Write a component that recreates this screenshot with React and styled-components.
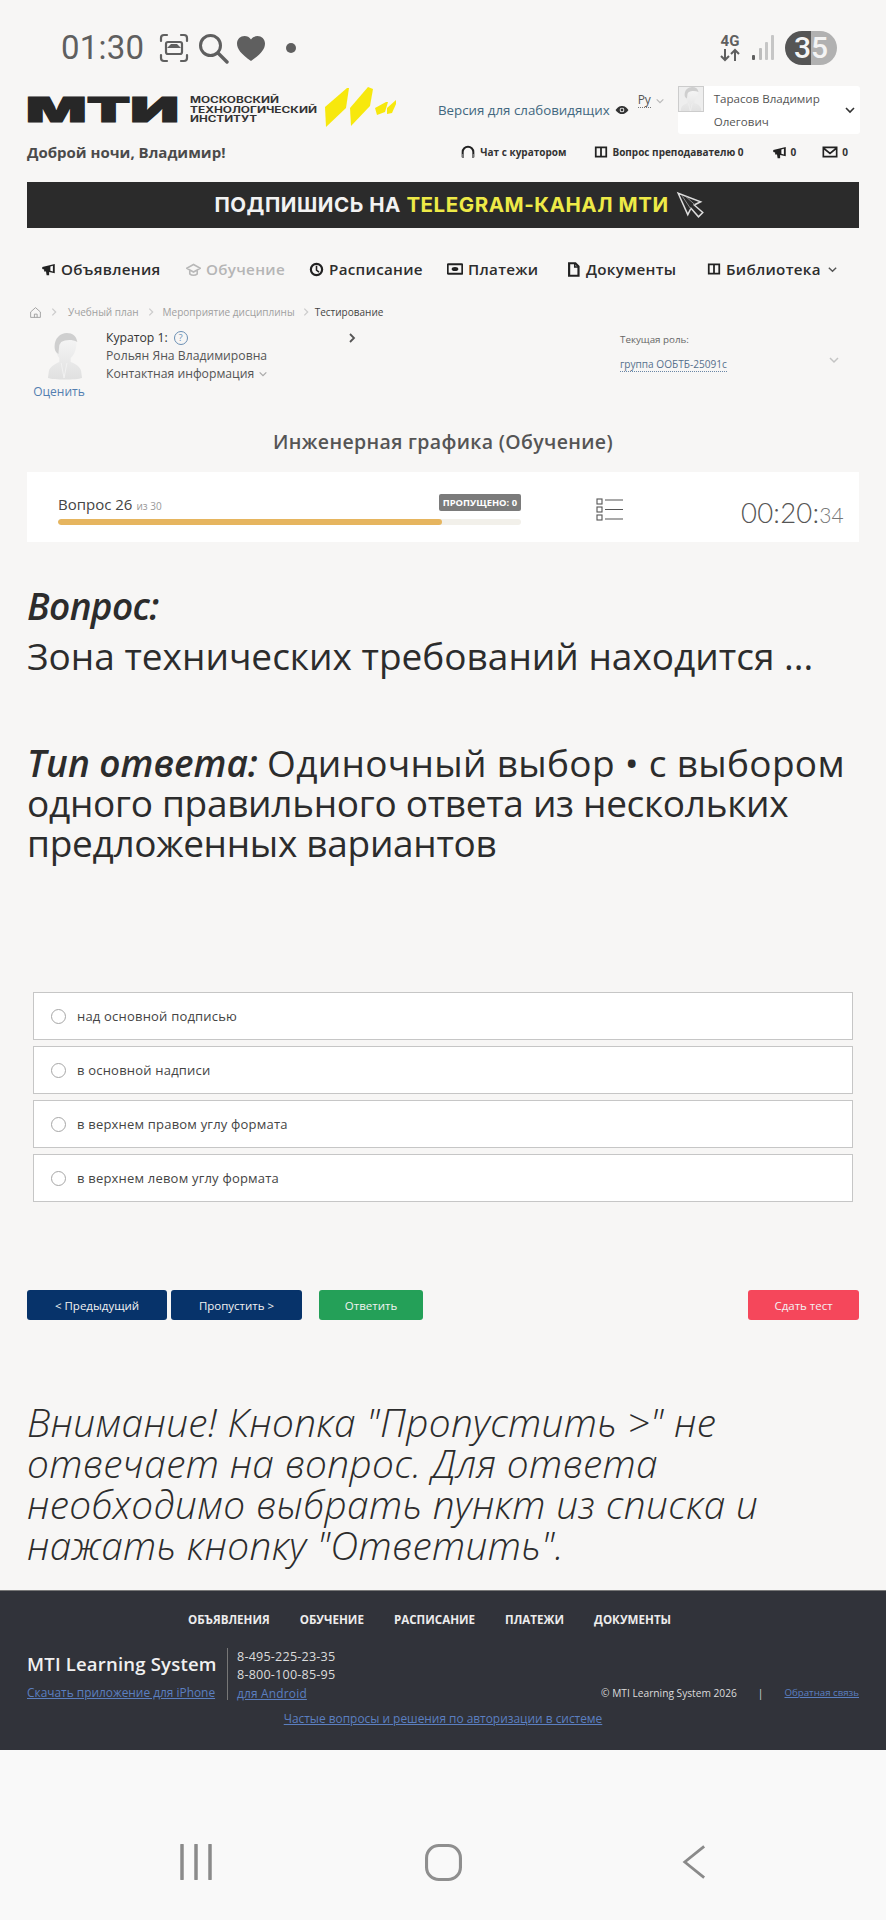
import React from 'react';
import styled, { createGlobalStyle } from 'styled-components';

const Global = createGlobalStyle`
  html, body { margin: 0; padding: 0; background: #f7f6f5; }
  body { font-family: "Open Sans", "Noto Sans", sans-serif; color: #333; }
  * { box-sizing: border-box; }
`;
const Page = styled.div`width: 886px; height: 1920px; overflow: hidden; display: flex; flex-direction: column; background: #f7f6f5;`;

const Svg = styled.svg`display: block; flex: none; margin-left: ${p => p.$ml || 0}px; margin-right: ${p => p.$mr || 0}px;`;

const StatusBar = styled.div`height: 86px; padding: 26px 49px 0 61px; display: flex; justify-content: space-between; align-items: flex-start;`;
const StatusLeft = styled.div`display: flex; align-items: center; height: 44px; color: #5f5f5f;`;
const Clock = styled.span`font: 400 33px/44px Roboto, sans-serif; margin-right: 14px; letter-spacing: .2px;`;
const StatusRight = styled.div`display: flex; align-items: center; height: 44px; gap: 10px;`;
const Net = styled.div`display: flex; flex-direction: column; align-items: center; color: #5f5f5f; font: 700 15px/14px Roboto, sans-serif; width: 22px;`;
const Battery = styled.div`width: 52px; height: 34px; border-radius: 17px; background: linear-gradient(90deg, #555 0 50%, #b1b1b1 50%); color: #f4f4f4; font: 500 30px/34px Roboto, sans-serif; text-align: center;`;

const Header = styled.div`display: flex; padding: 0 28px 0 27px; height: 48px; align-items: flex-start;`;
const Logo = styled.div`width: 372px; height: 48px; flex: none;`;
const Vision = styled.a`margin: 14px 0 0 39px; font-size: 13.3px; line-height: 20px; color: #41677f; white-space: nowrap; display: flex; align-items: center; gap: 5px; flex: none;`;
const Lang = styled.div`margin: 7px 0 0 9px; font-size: 12px; line-height: 20px; color: #555; display: flex; align-items: center; gap: 4px; flex: none; width: 40px;`;
const LangText = styled.span`border-bottom: 1px dotted #777; line-height: 14px;`;
const User = styled.div`width: 182px; height: 48px; background: #fff; border-radius: 3px; display: flex; position: relative; flex: none;`;
const Avatar = styled.div`width: 26px; height: 26px; border: 1px solid #ccc; background: #eee; overflow: hidden; flex: none; display: flex; justify-content: center;`;
const UserName = styled.div`margin-left: 10px; width: 120px; font-size: 11.6px; line-height: 23px; color: #555; padding-top: 1px;`;
const UserChevron = styled.div`position: absolute; right: 4px; top: 18px; color: #333;`;

const SubHeader = styled.div`display: flex; align-items: center; padding: 0 38px 0 27px; height: 24px; margin-top: 6px;`;
const Greeting = styled.div`font-size: 15px; font-weight: 700; color: #4b4b4b; flex: 1;`;
const QuickLink = styled.div`display: flex; align-items: center; gap: 4px; font-size: 10px; font-weight: 700; color: #333; margin-left: ${p => p.$gap || 0}px; white-space: nowrap;`;

const Banner = styled.div`height: 46px; margin: 18px 27px 0; padding-left: 34px; background: #2b2b2b; display: flex; align-items: center; justify-content: center; gap: 7px; font: 700 20.5px/46px Inter, sans-serif; letter-spacing: .55px; color: #f2f2f2;`;
const Yellow = styled.span`color: #eeea47;`;

const Nav = styled.nav`display: grid; grid-template-columns: 145px 123px 138px 119px 141px auto; align-items: center; height: 24px; margin-top: 29px; padding-left: 41px;`;
const NavItem = styled.div`display: flex; align-items: center; gap: 5px; font-size: 15.2px; font-weight: 600; letter-spacing: .3px; color: ${p => p.$muted ? '#b5b5b5' : '#2d2d2d'}; white-space: nowrap;`;
const Tint = styled.span`display: flex; color: ${p => p.$c}; margin-left: ${p => p.$ml || 0}px;`;

const Crumbs = styled.div`display: flex; align-items: center; height: 18px; margin-top: 22px; padding-left: 29px; font-size: 10px; color: #a0a0a0;`;
const CrumbSep = styled.span`margin: 0 ${p => p.$r ?? 7}px 0 ${p => p.$l ?? 7}px; display: inline-flex; color: #ccc;`;
const CrumbLast = styled.span`color: #444;`;

const Curator = styled.div`display: flex; height: 80px; margin-top: 7px; padding-left: 33px;`;
const CuratorPhoto = styled.div`width: 52px; padding-top: 5px; display: flex; flex-direction: column; align-items: center; font-size: 12px; color: #527eb0; line-height: 16px; flex: none;`;
const Rate = styled.span`margin-top: 4px;`;
const CuratorInfo = styled.div`margin-left: 21px; width: 254px; font-size: 12.2px; line-height: 18px; color: #555; padding-top: 1px; position: relative; flex: none;`;
const CuratorTitle = styled.div`color: #333; display: flex; align-items: center; gap: 6px;`;
const ContactRow = styled.div`display: flex; align-items: center; gap: 4px;`;
const Help = styled.span`width: 14px; height: 14px; border-radius: 50%; border: 1.5px solid #6a8fb3; color: #6a8fb3; font-size: 9.5px; line-height: 11px; text-align: center; display: inline-block;`;
const NextArrow = styled.div`position: absolute; right: 2px; top: 4px; color: #555;`;
const Role = styled.div`margin-left: 260px; flex: 1; position: relative; color: #666; line-height: 23px;`;
const RoleLabel = styled.div`font-size: 9.8px;`;
const RoleValue = styled.span`border-bottom: 1px dotted #6a86a5; color: #56708c; font-size: 10.1px; line-height: 14px; display: inline-block;`;
const RoleChevron = styled.div`position: absolute; left: 208px; top: 26px; color: #c4c4c4;`;

const Title = styled.h1`margin: 20px 0 0; text-align: center; font-size: 19.5px; line-height: 28px; font-weight: 600; color: #555; letter-spacing: .35px;`;

const Progress = styled.div`height: 70px; margin: 16px 27px 0; background: #fff; display: flex; align-items: flex-start; position: relative;`;
const ProgressMain = styled.div`width: 463px; margin: 21px 0 0 31px; flex: none;`;
const ProgressHead = styled.div`display: flex; justify-content: space-between; align-items: center; height: 22px;`;
const QuestionNo = styled.span`font-size: 15px; color: #444;`;
const Of = styled.span`font-size: 10px; color: #999; margin-left: 4px;`;
const Skipped = styled.span`background: #7b7b7b; color: #fff; font-size: 9.4px; font-weight: 700; padding: 0 4px; line-height: 17px; height: 17px; border-radius: 2px; margin-top: -4px; white-space: nowrap;`;
const Track = styled.div`height: 6px; border-radius: 3px; background: #f2f0ea; margin-top: 4px; overflow: hidden;`;
const Fill = styled.div`height: 100%; border-radius: 3px; background: #e6b55f;`;
const ListIcon = styled.div`margin: 25px 0 0 75px; flex: none;`;
const Timer = styled.div`position: absolute; right: 15px; top: 23px; font: 300 27.5px/36px Lato, "Open Sans", sans-serif; color: #555; letter-spacing: .2px;`;
const TimerSec = styled.span`font-size: 21px; color: #777;`;

const Content = styled.div`padding: 0 27px; margin-top: 39px; color: #2c2c2c; font-size: 37px;`;
const Strong = styled.b`font-style: italic; font-weight: 600; letter-spacing: ${p => p.$ls || 0}px;`;
const Block = styled.div`margin-bottom: ${p => p.$mb}px; line-height: ${p => p.$lh}px; letter-spacing: ${p => p.$ls || 0}px;`;
const Spaced = styled.span`letter-spacing: .3px;`;

const Answers = styled.div`margin: 129px 33px 0; display: flex; flex-direction: column; gap: 6px;`;
const Answer = styled.label`height: 48px; background: #fff; border: 1.5px solid #c6c6c6; display: flex; align-items: center; padding-left: 17px; font-size: 13px; color: #444; gap: 11px; letter-spacing: .2px;`;
const Radio = styled.span`width: 15px; height: 15px; border-radius: 50%; border: 1.5px solid #a6a6a6; background: #fff; flex: none;`;

const Buttons = styled.div`display: flex; margin: 88px 27px 0; height: 30px;`;
const Btn = styled.button`height: 30px; width: ${p => p.$w}px; margin-left: ${p => p.$ml || 0}px; background: ${p => p.$bg}; color: #f2f2f2; border: 0; border-radius: 3px; font: 400 11.5px "Open Sans", sans-serif; padding: 0; flex: none;`;

const Notice = styled.div`margin: 82px 27px 0; font-style: italic; font-weight: 300; font-size: 38.8px; line-height: 41px; color: #2c2c2c; letter-spacing: .35px;`;

const Footer = styled.footer`height: 160px; margin-top: 24px; background: #31333a; border-top: 1px solid #777; flex: none; color: #e6e6e6;`;
const FooterNav = styled.div`display: flex; justify-content: center; gap: 30px; padding: 19px 27px 0 0; font-size: 11.6px; font-weight: 700; line-height: 20px; color: #ececec;`;
const FooterRow = styled.div`display: flex; padding-left: 27px; margin-top: 18px; height: 52px;`;
const Brand = styled.div`width: 191px; flex: none; display: flex; flex-direction: column; gap: 7px;`;
const BrandName = styled.div`font-size: 18.5px; font-weight: 600; line-height: 25px; margin-top: 3px; color: #f0f0f0; letter-spacing: .2px; white-space: nowrap;`;
const FLink = styled.a`color: #5b7fc0; text-decoration: underline; font-size: ${p => p.$fs || 11.9}px; white-space: nowrap; line-height: 18px;`;
const Contacts = styled.div`margin-left: 9px; padding-left: 9px; border-left: 1px solid #777; width: 150px; flex: none; font-size: 12.6px; line-height: 18px; color: #dcdcdc; display: flex; flex-direction: column; letter-spacing: .2px;`;
const Copy = styled.div`margin-left: auto; margin-right: 27px; padding-top: 36px; font-size: 10.2px; line-height: 18px; display: flex; color: #dcdcdc; white-space: nowrap;`;
const CopySep = styled.span`margin: 0 21px;`;
const Faq = styled.div`text-align: center; margin-top: 8px; line-height: 18px;`;

const NavBar = styled.div`flex: 1; display: flex; justify-content: space-between; align-items: center; padding: 54px 180px 0 178px; background: #f9f9f9;`;

const A = ({ s = 14, h, ml, mr, children, vb = '0 0 24 24' }) => <Svg width={s} height={h || s} viewBox={vb} $ml={ml} $mr={mr}>{children}</Svg>;
const Chevron = ({ s = 10, w = 1.5 }) => <A s={s} vb="0 0 12 12"><path d="M2 4l4 4 4-4" fill="none" stroke="currentColor" strokeWidth={w} /></A>;
const Gt = ({ s = 12, w = 1.5 }) => <A s={s} vb="0 0 12 12"><path d="M4 2l4 4-4 4" fill="none" stroke="currentColor" strokeWidth={w} /></A>;
const Megaphone = ({ s = 14 }) => <A s={s}><path d="M2 8l20-5v15l-9-2v5H9l-1-6H5l0-3-3-1z" fill="#222" /><path d="M15 7l4-1v9l-4-1z" fill="#fff" /></A>;
const Book = ({ s = 14 }) => <A s={s}><path d="M3 4h18v16H3z M12 4v16" fill="none" stroke="#222" strokeWidth="3" /></A>;
const Person = ({ w = 36, h = 47, ml, id = 'pg' }) => (
  <Svg width={w} height={h} viewBox="0 0 38 47" $ml={ml} preserveAspectRatio="none">
    <defs><linearGradient id={id} x1="0" y1="0" x2="0" y2="1"><stop offset="0" stopColor="#f7f7f7" /><stop offset="1" stopColor="#e0e0e0" /></linearGradient></defs>
    <path d="M9 12C9 5 13 1 20 1s11 4 11 10c0 6-3 12-6 14v4c6 2 10 5 11 9l1 7c-6 2-30 2-36 0l1-7c1-4 6-7 11-9v-4c-2-2-4-7-5-13z" fill={`url(#${id})`} />
    <path d="M8 14C8 5 14 0 21 0c6 0 10 3 11 9-6-3-13-2-17 0l-2 3-1 9c-3-2-4-4-4-7z" fill="#cfcfcf" />
    <path d="M15 30l3 15 3-15" fill="none" stroke="#f2f2f2" />
  </Svg>
);

const YellowMark = () => (
  <g fill="#f7e80d">
    <polygon points="325,107 347,88 349,88 346,108 326,127" />
    <polygon points="350,108 368,87 373,89 370,106 351,126" />
    <polygon points="375,108 386,102 388,102 385,112 377,115" />
    <polygon points="387,108 396,100 396,104 392,113 387,114" />
  </g>
);

export default function App() {
  return (
    <Page>
      <Global />
      <StatusBar>
        <StatusLeft>
          <Clock>01:30</Clock>
          <A s={32} vb="0 0 32 32">
            <path d="M9 3H6a3 3 0 0 0-3 3v3M23 3h3a3 3 0 0 1 3 3v3M9 29H6a3 3 0 0 1-3-3v-3M23 29h3a3 3 0 0 0 3-3v-3" fill="none" stroke="#5f5f5f" strokeWidth="2.2" strokeLinecap="round" />
            <rect x="8" y="10" width="16" height="12" rx="2" fill="none" stroke="#5f5f5f" strokeWidth="2.2" />
            <path d="M9 16l4-4h6l4 4z" fill="#5f5f5f" />
          </A>
          <A s={32} vb="0 0 32 32" ml={7}>
            <circle cx="13.5" cy="13.5" r="10" fill="none" stroke="#5f5f5f" strokeWidth="3" />
            <path d="M21 21l9 9" stroke="#5f5f5f" strokeWidth="3.4" strokeLinecap="round" />
          </A>
          <A s={30} vb="0 0 30 30" ml={7}>
            <path d="M15 28C5 21 1 16 1 10.500 1 6 4.500 3 8.500 3 11 3 13.500 4 15 6.500 16.500 4 19 3 21.500 3 25.500 3 29 6 29 10.500 29 16 25 21 15 28z" fill="#5f5f5f" />
          </A>
          <A s={12} vb="0 0 12 12" ml={19}><circle cx="6" cy="6" r="5" fill="#5f5f5f" /></A>
        </StatusLeft>
        <StatusRight>
          <Net>
            4G
            <A s={22} h={14} vb="0 0 22 14">
              <path d="M6 1v11M2 8l4 4 4-4M16 13V2M12 6l4-4 4 4" fill="none" stroke="#5f5f5f" strokeWidth="2" />
            </A>
          </Net>
          <A s={24} h={28} vb="0 0 24 28">
            <rect x="1" y="21" width="3" height="5" rx="1" fill="#5f5f5f" />
            <rect x="8" y="14" width="3" height="12" rx="1" fill="#bdbdbd" />
            <rect x="14" y="8" width="3" height="18" rx="1" fill="#c6c6c6" />
            <rect x="20" y="1" width="3" height="25" rx="1" fill="#c6c6c6" />
          </A>
          <Battery>35</Battery>
        </StatusRight>
      </StatusBar>

      <Header>
        <Logo>
          <svg width="372" height="48" viewBox="27 86 372 48">
            <text x="26" y="122" textLength="153" lengthAdjust="spacingAndGlyphs" fontFamily="Inter, sans-serif" fontWeight="900" fontSize="34.5" fill="#272727" stroke="#272727" strokeWidth="1.2">МТИ</text>
            <g fontFamily="Inter, sans-serif" fontWeight="700" fontSize="8.4" fill="#333">
              <text x="190" y="103" textLength="89" lengthAdjust="spacingAndGlyphs">МОСКОВСКИЙ</text>
              <text x="190" y="112.500" textLength="127" lengthAdjust="spacingAndGlyphs">ТЕХНОЛОГИЧЕСКИЙ</text>
              <text x="190" y="122" textLength="67" lengthAdjust="spacingAndGlyphs">ИНСТИТУТ</text>
            </g>
            <YellowMark />
          </svg>
        </Logo>
        <Vision>
          Версия для слабовидящих
          <A s={14} h={10} vb="0 0 24 16">
            <path d="M1 8c4-6 8-7 11-7s7 1 11 7c-4 6-8 7-11 7S5 14 1 8z" fill="#333" />
            <circle cx="12" cy="8" r="4" fill="#fff" /><circle cx="12" cy="8" r="2.500" fill="#333" />
          </A>
        </Vision>
        <Lang><LangText>Ру</LangText><Tint $c="#bbb"><Chevron /></Tint></Lang>
        <User>
          <Avatar><Person w={22} h={26} id="pa" /></Avatar>
          <UserName>Тарасов Владимир Олегович</UserName>
          <UserChevron><Chevron s={12} w={1.6} /></UserChevron>
        </User>
      </Header>

      <SubHeader>
        <Greeting>Доброй ночи, Владимир!</Greeting>
        <QuickLink>
          <A s={16}><path d="M4 20v-8a8 8 0 0 1 16 0v8" fill="none" stroke="#222" strokeWidth="3" /><path d="M3 15h3v6H3zM18 15h3v6h-3z" fill="#777" /></A>
          Чат с куратором
        </QuickLink>
        <QuickLink $gap={28}><Book />Вопрос преподавателю 0</QuickLink>
        <QuickLink $gap={28}><Megaphone s={15} />0</QuickLink>
        <QuickLink $gap={26}>
          <A s={16}><path d="M2 5h20v14H2zM2 6l10 8 10-8" fill="none" stroke="#222" strokeWidth="2.500" /></A>0
        </QuickLink>
      </SubHeader>

      <Banner>
        <span>ПОДПИШИСЬ НА <Yellow>TELEGRAM-КАНАЛ МТИ</Yellow></span>
        <A s={30} vb="0 0 28 28">
          <path d="M2 3l21 8-6 3 8 7-4 4-7-8-3 6z" fill="#2b2b2b" stroke="#ddd" strokeWidth="1.4" />
          <path d="M6 6l8 12M9 6l9 8" stroke="#999" strokeWidth=".8" />
        </A>
      </Banner>

      <Nav>
        <NavItem><Megaphone s={15} />Объявления</NavItem>
        <NavItem $muted>
          <A s={15}><path d="M12 4L1 10l11 6 11-6zM6 14v5c3 3 9 3 12 0v-5" fill="none" stroke="#b8b8b8" strokeWidth="2.500" /></A>
          Обучение
        </NavItem>
        <NavItem>
          <A s={15}><circle cx="12" cy="12" r="9" fill="none" stroke="#222" strokeWidth="3.500" /><path d="M12 6v7l4 3" fill="none" stroke="#222" strokeWidth="2.500" /></A>
          Расписание
        </NavItem>
        <NavItem>
          <A s={16}><rect x="1" y="5" width="22" height="14" rx="1" fill="none" stroke="#222" strokeWidth="3" /><ellipse cx="12" cy="12" rx="5" ry="3" fill="#222" /></A>
          Платежи
        </NavItem>
        <NavItem>
          <A s={15}><path d="M5 2h10l5 5v15H5z" fill="none" stroke="#222" strokeWidth="3.500" /><path d="M14 2v6h6" fill="none" stroke="#222" strokeWidth="2.500" /></A>
          Документы
        </NavItem>
        <NavItem>
          <Book />Библиотека
          <Tint $c="#555" $ml={1}><Chevron s={11} /></Tint>
        </NavItem>
      </Nav>

      <Crumbs>
        <A s={13} mr={7}><path d="M3 11l9-8 9 8v10H3z M10 21v-6h5v6" fill="none" stroke="#999" strokeWidth="1.600" /></A>
        <CrumbSep $l={0} $r={9}><Gt s={10} /></CrumbSep>
        Учебный план
        <CrumbSep><Gt s={10} /></CrumbSep>
        Мероприятие дисциплины
        <CrumbSep $l={6} $r={4}><Gt s={10} /></CrumbSep>
        <CrumbLast>Тестирование</CrumbLast>
      </Crumbs>

      <Curator>
        <CuratorPhoto>
          <Person ml={12} />
          <Rate>Оценить</Rate>
        </CuratorPhoto>
        <CuratorInfo>
          <CuratorTitle>Куратор 1: <Help>?</Help></CuratorTitle>
          <div>Рольян Яна Владимировна</div>
          <ContactRow>Контактная информация <Tint $c="#aaa"><Chevron /></Tint></ContactRow>
          <NextArrow><Gt s={12} w={1.8} /></NextArrow>
        </CuratorInfo>
        <Role>
          <RoleLabel>Текущая роль:</RoleLabel>
          <div><RoleValue>группа ООБТБ-25091с</RoleValue></div>
          <RoleChevron><Chevron s={12} w={1.5} /></RoleChevron>
        </Role>
      </Curator>

      <Title>Инженерная графика (Обучение)</Title>

      <Progress>
        <ProgressMain>
          <ProgressHead>
            <span><QuestionNo>Вопрос 26</QuestionNo><Of>из 30</Of></span>
            <Skipped>ПРОПУЩЕНО: 0</Skipped>
          </ProgressHead>
          <Track><Fill style={{ width: `${(384 / 463) * 100}%` }} /></Track>
        </ProgressMain>
        <ListIcon>
          <A s={28} h={26} vb="0 0 28 26">
            <g fill="none" stroke="#555" strokeWidth="1.100">
              <rect x="1" y="2" width="5" height="5" /><rect x="1" y="10" width="5" height="5" /><rect x="1" y="18" width="5" height="5" />
              <path d="M9 3h18M9 12.500h18M9 22h18" />
            </g>
          </A>
        </ListIcon>
        <Timer>00:20:<TimerSec>34</TimerSec></Timer>
      </Progress>

      <Content>
        <Block $mb={0} $lh={50}><Strong $ls={-0.6}>Вопрос:</Strong></Block>
        <Block $mb={62} $lh={50}>Зона технических требований находится ...</Block>
        <Block $mb={0} $lh={40} $ls={-0.3}><Strong $ls={0}>Тип ответа:</Strong> <Spaced>Одиночный выбор • с выбором</Spaced> одного правильного ответа из нескольких предложенных вариантов</Block>
      </Content>

      <Answers>
        {['над основной подписью', 'в основной надписи', 'в верхнем правом углу формата', 'в верхнем левом углу формата'].map(t => (
          <Answer key={t}><Radio />{t}</Answer>
        ))}
      </Answers>

      <Buttons>
        <Btn $bg="#07336a" $w={140}>&lt; Предыдущий</Btn>
        <Btn $bg="#07336a" $w={131} $ml={4}>Пропустить &gt;</Btn>
        <Btn $bg="#24a058" $w={104} $ml={17}>Ответить</Btn>
        <Btn $bg="#f5475b" $w={111} $ml={325}>Сдать тест</Btn>
      </Buttons>

      <Notice>Внимание! Кнопка "Пропустить &gt;" не отвечает на вопрос. Для ответа необходимо выбрать пункт из списка и нажать кнопку "Ответить".</Notice>

      <Footer>
        <FooterNav>
          <span>ОБЪЯВЛЕНИЯ</span><span>ОБУЧЕНИЕ</span><span>РАСПИСАНИЕ</span><span>ПЛАТЕЖИ</span><span>ДОКУМЕНТЫ</span>
        </FooterNav>
        <FooterRow>
          <Brand>
            <BrandName>MTI Learning System</BrandName>
            <FLink>Скачать приложение для iPhone</FLink>
          </Brand>
          <Contacts>
            <span>8-495-225-23-35</span>
            <span>8-800-100-85-95</span>
            <FLink>для Android</FLink>
          </Contacts>
          <Copy>
            © MTI Learning System 2026<CopySep>|</CopySep><FLink $fs={9.7}>Обратная связь</FLink>
          </Copy>
        </FooterRow>
        <Faq><FLink>Частые вопросы и решения по авторизации в системе</FLink></Faq>
      </Footer>

      <NavBar>
        <A s={36} vb="0 0 36 36">
          <path d="M4 1v34M18 1v34M32 1v34" stroke="#8a8a8a" strokeWidth="3.500" strokeLinecap="round" />
        </A>
        <A s={37} mr={10} vb="0 0 36 36">
          <rect x="1.500" y="1.500" width="33" height="33" rx="12" fill="none" stroke="#8f8f8f" strokeWidth="3" />
        </A>
        <A s={24} h={38} vb="0 0 26 38">
          <path d="M24 2L3 19l21 17" fill="none" stroke="#8a8a8a" strokeWidth="3" />
        </A>
      </NavBar>
    </Page>
  );
}
